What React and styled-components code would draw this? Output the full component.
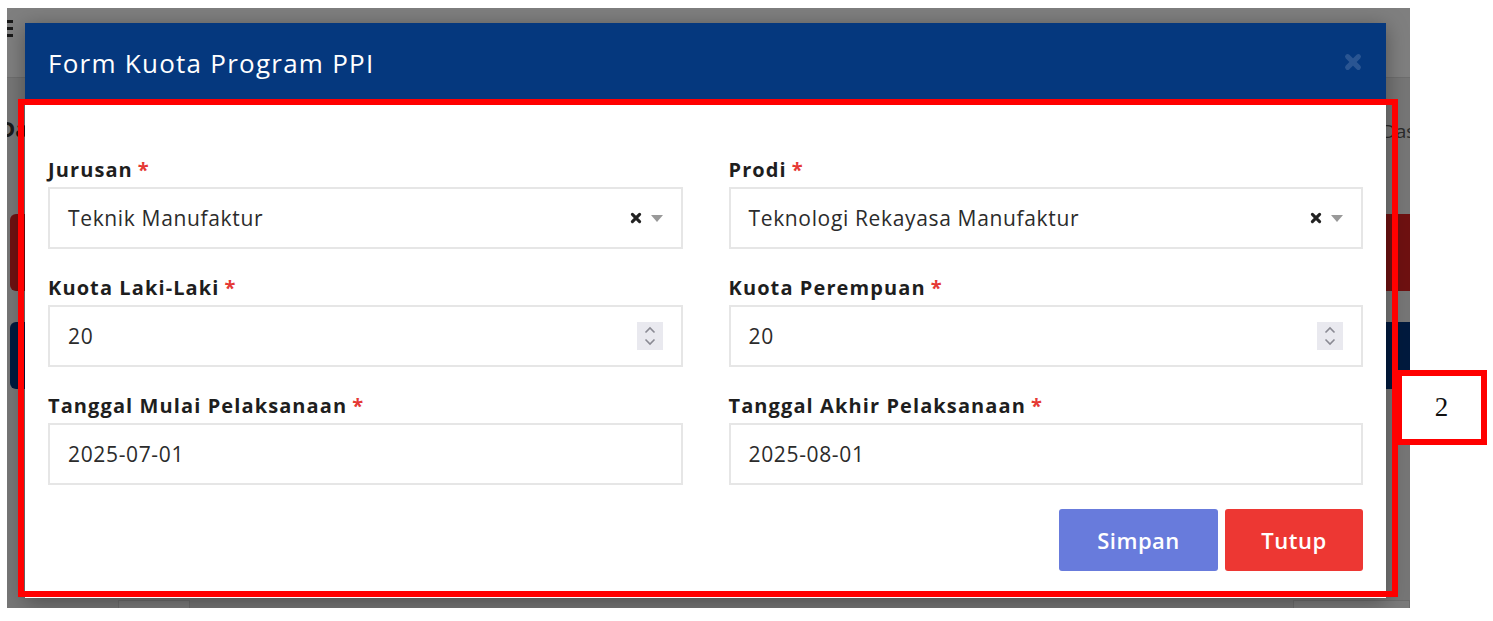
import styled, { createGlobalStyle } from 'styled-components'

const GlobalStyle = createGlobalStyle`
  body {
    margin: 0;
    background: #ffffff;
    font-family: "Open Sans", "Noto Sans", sans-serif;
  }
`

const Stage = styled.div`
  position: relative;
  width: 1493px;
  height: 621px;
  padding: 8px 0 0 7px;
  box-sizing: border-box;
  overflow: hidden;
`

const Frame = styled.div`
  position: relative;
  width: 1403px;
  height: 600px;
  overflow: hidden;
  background: #ececec;
`

const Navbar = styled.div`
  height: 70px;
  background: #ffffff;
  border-bottom: 1px solid #dcdcdc;
  display: flex;
  align-items: flex-start;
  padding-top: 12px;
  box-sizing: border-box;
`

const Burger = styled.div`
  width: 8px;
  margin-left: -2px;
  display: flex;
  flex-direction: column;
  gap: 4px;
  span {
    height: 3px;
    background: #333;
  }
`

const PageHead = styled.div`
  display: flex;
  justify-content: space-between;
  align-items: center;
  height: 60px;
  margin-top: 20px;
  font-size: 22px;
  font-weight: 700;
  color: #333;
`

const PageTitle = styled.div`
  margin-left: -8px;
`

const Crumb = styled.div`
  font-size: 19px;
  font-weight: 400;
  color: #555;
  margin: 6px -70px 0 0;
`

const Banner = styled.div`
  margin: 56px 0 0 3px;
  height: 77px;
  border-radius: 6px 0 0 6px;
  background: ${(p) => p.$bg};
`

const BannerNavy = styled(Banner)`
  margin-top: 31px;
  height: 67px;
`

const Pager = styled.div`
  display: flex;
  justify-content: space-between;
  margin-top: 211px;
  padding-left: 111px;
  div {
    width: 70px;
    height: 20px;
    border: 1px solid #d8d8d8;
    background: #f7f7f7;
  }
  div:last-child {
    width: 115px;
  }
`

const Dim = styled.div`
  position: absolute;
  inset: 0;
  background: rgba(0, 0, 0, 0.5);
`

const Modal = styled.div`
  position: absolute;
  left: 18px;
  top: 15px;
  width: 1361px;
  height: 575px;
  background: #ffffff;
  display: flex;
  flex-direction: column;
  box-shadow: 0 4px 20px rgba(0, 0, 0, 0.35);
`

const ModalHeader = styled.div`
  height: 82px;
  flex-shrink: 0;
  background: #05387e;
  display: flex;
  align-items: center;
  justify-content: space-between;
  padding: 0 24px 0 23px;
  box-sizing: border-box;
`

const ModalTitle = styled.h2`
  margin: 0 0 2px;
  color: #ffffff;
  font-size: 26px;
  font-weight: 500;
  letter-spacing: 1.25px;
`

const CloseBtn = styled.button`
  border: none;
  background: none;
  padding: 0;
  width: 18px;
  height: 18px;
  display: flex;
  margin-bottom: 4px;
`

const ModalBody = styled.form`
  flex: 1;
  padding: 50px 23px 19px;
  display: flex;
  flex-direction: column;
`

const Grid = styled.div`
  display: grid;
  grid-template-columns: 1fr 1fr;
  column-gap: 46px;
  row-gap: 24px;
`

const Field = styled.div`
  display: flex;
  flex-direction: column;
`

const Label = styled.label`
  font-size: 20px;
  line-height: 26px;
  padding-top: 2px;
  font-weight: 700;
  letter-spacing: 1.1px;
  color: #1e1e1e;
  margin-bottom: 4px;
  em {
    font-style: normal;
    color: #e53935;
    margin-left: 5px;
  }
`

const Box = styled.div`
  height: 62px;
  box-sizing: border-box;
  border: 2px solid #e6e6e6;
  display: flex;
  align-items: center;
  padding: 0 18px 0 18px;
  font-size: 21px;
  letter-spacing: 0.65px;
  color: #2b2b2b;
`

const Value = styled.span`
  flex: 1;
`

const ClearX = styled.span`
  display: flex;
  margin-right: 9px;
`

const Caret = styled.span`
  width: 0;
  height: 0;
  border-left: 6px solid transparent;
  border-right: 6px solid transparent;
  border-top: 7px solid #999;
  margin-top: 1px;
`

const Spinner = styled.span`
  width: 26px;
  height: 28px;
  background: #e9e9ef;
  display: flex;
  align-items: center;
  justify-content: center;
`

const Actions = styled.div`
  display: flex;
  justify-content: flex-end;
  gap: 7px;
  margin-top: 24px;
`

const Button = styled.button`
  height: 62px;
  width: ${(p) => p.$w}px;
  border: none;
  border-radius: 3px;
  background: ${(p) => p.$bg};
  color: #ffffff;
  font-family: inherit;
  font-size: 22px;
  font-weight: 600;
  letter-spacing: 0.5px;
`

const Annotation = styled.div`
  position: absolute;
  left: 18px;
  top: 99px;
  width: 1380px;
  height: 498px;
  box-sizing: border-box;
  border: 6px solid #ff0000;
  pointer-events: none;
`

const Tag = styled.div`
  position: absolute;
  left: 1396px;
  top: 370px;
  width: 91px;
  height: 75px;
  box-sizing: border-box;
  border: 6px solid #ff0000;
  background: #ffffff;
  display: flex;
  align-items: center;
  justify-content: center;
  font-family: "Liberation Serif", serif;
  font-size: 27px;
  color: #111;
`

const XIcon = ({ size, color, width }) => (
  <svg width={size} height={size} viewBox="0 0 10 10">
    <path d="M2 2 L8 8 M8 2 L2 8" stroke={color} strokeWidth={width} strokeLinecap="round" />
  </svg>
)

const SpinIcon = () => (
  <svg width="14" height="22" viewBox="0 0 14 22">
    <path d="M2.5 7.5 L7 3 L11.5 7.5 M2.5 14.5 L7 19 L11.5 14.5" fill="none" stroke="#8a8a93" strokeWidth="1.6" />
  </svg>
)

function SelectBox({ value }) {
  return (
    <Box>
      <Value>{value}</Value>
      <ClearX><XIcon size={12} color="#222" width={2.6} /></ClearX>
      <Caret />
    </Box>
  )
}

function NumberBox({ value }) {
  return (
    <Box>
      <Value>{value}</Value>
      <Spinner><SpinIcon /></Spinner>
    </Box>
  )
}

const fields = [
  { label: 'Jurusan', kind: 'select', value: 'Teknik Manufaktur' },
  { label: 'Prodi', kind: 'select', value: 'Teknologi Rekayasa Manufaktur' },
  { label: 'Kuota Laki-Laki', kind: 'number', value: '20' },
  { label: 'Kuota Perempuan', kind: 'number', value: '20' },
  { label: 'Tanggal Mulai Pelaksanaan', kind: 'text', value: '2025-07-01' },
  { label: 'Tanggal Akhir Pelaksanaan', kind: 'text', value: '2025-08-01' },
]

function App() {
  return (
    <>
      <GlobalStyle />
      <Stage>
        <Frame>
          <Navbar>
            <Burger><span /><span /><span /></Burger>
          </Navbar>
          <PageHead>
            <PageTitle>Data Kuota</PageTitle>
            <Crumb>Dashboard</Crumb>
          </PageHead>
          <Banner $bg="#dc2323" />
          <BannerNavy $bg="#03347c" />
          <Pager><div /><div /></Pager>
          <Dim />
          <Modal>
            <ModalHeader>
              <ModalTitle>Form Kuota Program PPI</ModalTitle>
              <CloseBtn type="button"><XIcon size={18} color="#2a5592" width={2.8} /></CloseBtn>
            </ModalHeader>
            <ModalBody>
              <Grid>
                {fields.map((f) => (
                  <Field key={f.label}>
                    <Label>{f.label}<em>*</em></Label>
                    {f.kind === 'select' && <SelectBox value={f.value} />}
                    {f.kind === 'number' && <NumberBox value={f.value} />}
                    {f.kind === 'text' && <Box><Value>{f.value}</Value></Box>}
                  </Field>
                ))}
              </Grid>
              <Actions>
                <Button type="button" $w={159} $bg="#687bdc">Simpan</Button>
                <Button type="button" $w={138} $bg="#ed3733">Tutup</Button>
              </Actions>
            </ModalBody>
          </Modal>
        </Frame>
        <Annotation />
        <Tag>2</Tag>
      </Stage>
    </>
  )
}

export default App
